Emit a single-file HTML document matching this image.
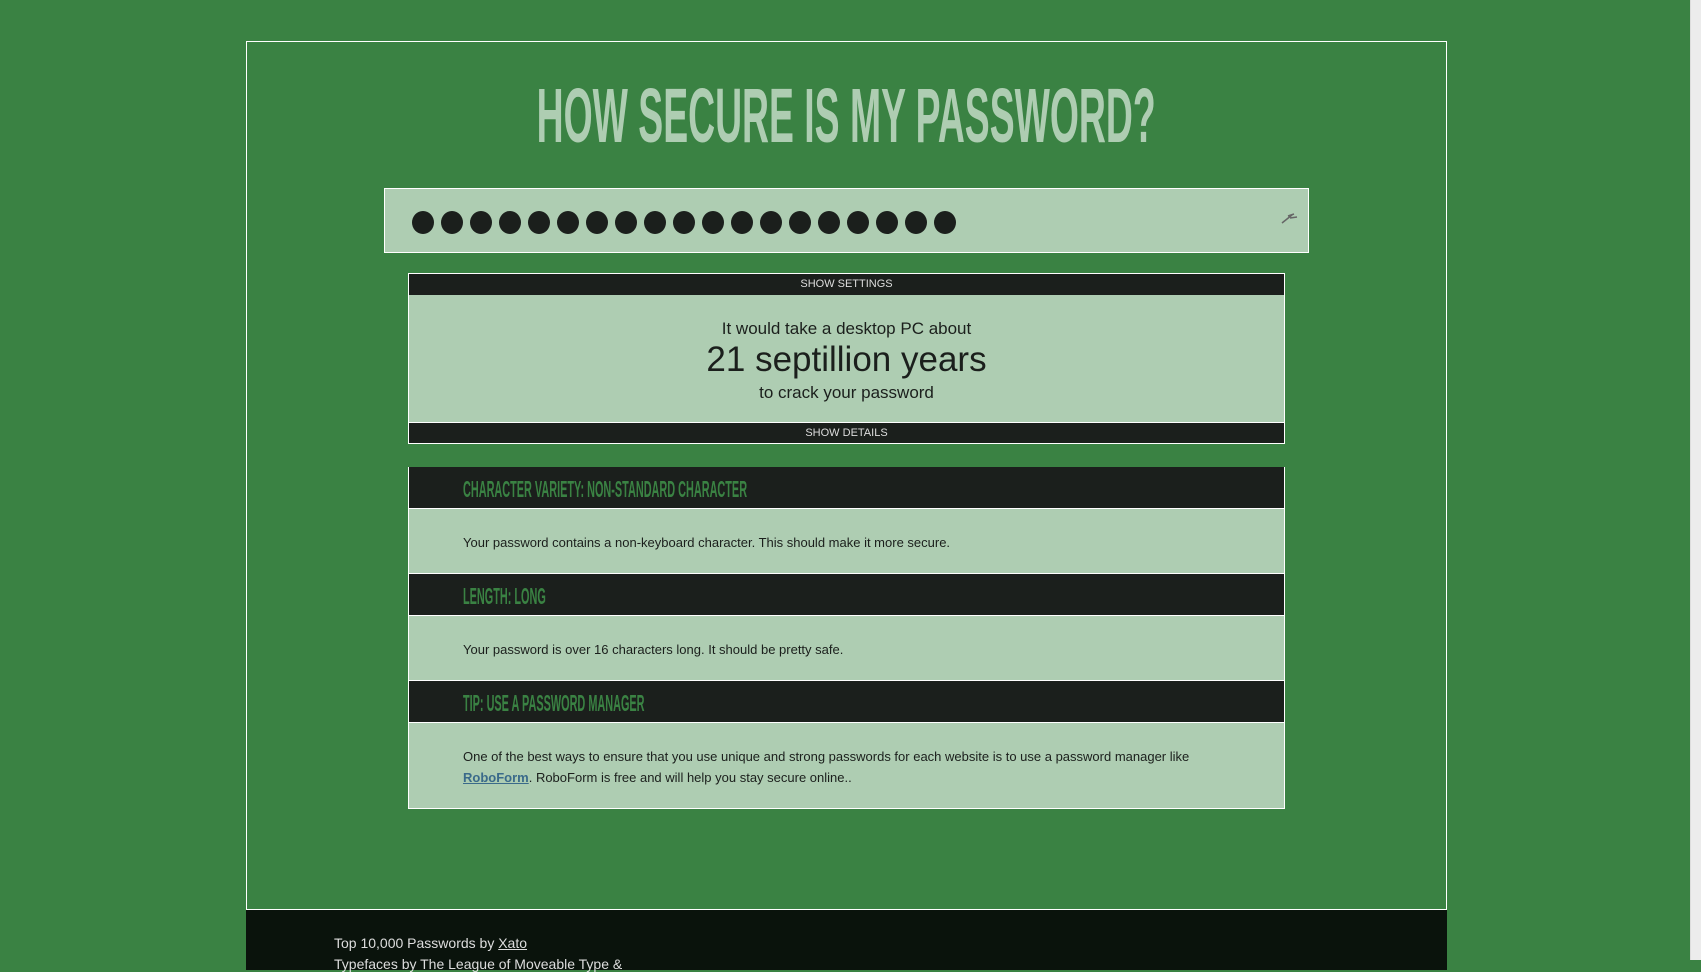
<!DOCTYPE html>
<html><head><meta charset="utf-8"><style>
html,body{margin:0;padding:0;width:1701px;height:960px;overflow:hidden;background:#3a8243;font-family:"Liberation Sans",sans-serif}
.sb{position:absolute;left:1690px;top:0;width:11px;height:960px;background:#ececec;border-left:1px solid #ddd}
.wrap{position:absolute;left:246px;top:41px;width:1199px;height:868px;border:1px solid #fff;border-bottom:none}
.title{position:absolute;left:-154px;width:2000px;top:78px;text-align:center;font-family:"Liberation Sans Narrow","Liberation Sans",sans-serif;font-weight:bold;color:#aecdb2;font-size:77px;line-height:77px;white-space:nowrap}
.title span{display:inline-block;transform:scaleX(0.485);transform-origin:center}
.inp{position:absolute;left:384px;top:188px;width:923px;height:63px;background:#aecdb2;border:1px solid #fff}
.dot{position:absolute;top:211px;width:22px;height:23px;border-radius:50%;background:#1b1f1c}
.res{position:absolute;left:408px;top:273px;width:875px;height:169px;border:1px solid #fff;background:#aecdb2}
.bar{position:absolute;left:0;width:875px;height:21px;background:#1b1f1c;color:#ddd;font-size:11px;line-height:21px;text-align:center}
.c{position:absolute;left:0;width:875px;text-align:center;color:#1b1f1c}
.det{position:absolute;left:408px;top:467px;width:875px;height:340px;border:1px solid #fff;background:#aecdb2}
.h{position:absolute;left:0;width:875px;height:41px;background:#1b1f1c;border-bottom:1px solid #fff;border-top:1px solid #fff}
.h span{position:absolute;left:54px;top:9px;font-family:"Liberation Sans Narrow","Liberation Sans",sans-serif;font-weight:bold;font-size:23px;color:#3a8243;display:inline-block;transform:scaleX(0.473);transform-origin:left;white-space:nowrap}
.b{position:absolute;left:54px;font-size:13px;color:#1b1f1c;line-height:21px}
.foot{position:absolute;left:246px;top:909px;width:1201px;height:60px;background:#0a130c;border-top:1px solid #fff}
.foot div{position:absolute;left:88px;font-size:14px;color:#ddd}
</style></head><body>
<div class="wrap"></div>
<div class="title"><span>HOW SECURE IS MY PASSWORD?</span></div>
<div class="inp"><svg style="position:absolute;left:895px;top:22px" width="20" height="14"><path d="M2 12 L12 4 M8 5 L14 3 M10 7 L17 6" stroke="#666" stroke-width="1.5" fill="none"/></svg></div>
<div class="dot" style="left:412px"></div><div class="dot" style="left:441px"></div><div class="dot" style="left:470px"></div><div class="dot" style="left:499px"></div><div class="dot" style="left:528px"></div><div class="dot" style="left:557px"></div><div class="dot" style="left:586px"></div><div class="dot" style="left:615px"></div><div class="dot" style="left:644px"></div><div class="dot" style="left:673px"></div><div class="dot" style="left:702px"></div><div class="dot" style="left:731px"></div><div class="dot" style="left:760px"></div><div class="dot" style="left:789px"></div><div class="dot" style="left:818px"></div><div class="dot" style="left:847px"></div><div class="dot" style="left:876px"></div><div class="dot" style="left:905px"></div><div class="dot" style="left:934px"></div>
<div class="res">
<div class="bar" style="top:0">SHOW SETTINGS</div>
<div class="c" style="top:45px;font-size:17px">It would take a desktop PC about</div>
<div class="c" style="top:66px;font-size:35px">21 septillion years</div>
<div class="c" style="top:109px;font-size:17px">to crack your password</div>
<div class="bar" style="top:148px;border-top:1px solid #fff;height:20px">SHOW DETAILS</div>
</div>
<div class="det">
<div class="h" style="top:-1px;border-top:none"><span>CHARACTER VARIETY: NON-STANDARD CHARACTER</span></div>
<div class="b" style="top:64px">Your password contains a non-keyboard character. This should make it more secure.</div>
<div class="h" style="top:105px"><span>LENGTH: LONG</span></div>
<div class="b" style="top:171px">Your password is over 16 characters long. It should be pretty safe.</div>
<div class="h" style="top:212px"><span>TIP: USE A PASSWORD MANAGER</span></div>
<div class="b" style="top:278px">One of the best ways to ensure that you use unique and strong passwords for each website is to use a password manager like<br><a style="color:#3a6a8a;font-weight:bold;text-decoration:underline">RoboForm</a>. RoboForm is free and will help you stay secure online..</div>
</div>
<div class="foot"><div style="top:25px">Top 10,000 Passwords by <u>Xato</u></div><div style="top:46px">Typefaces by The League of Moveable Type &amp;</div></div>
<div class="sb"></div>
</body></html>
